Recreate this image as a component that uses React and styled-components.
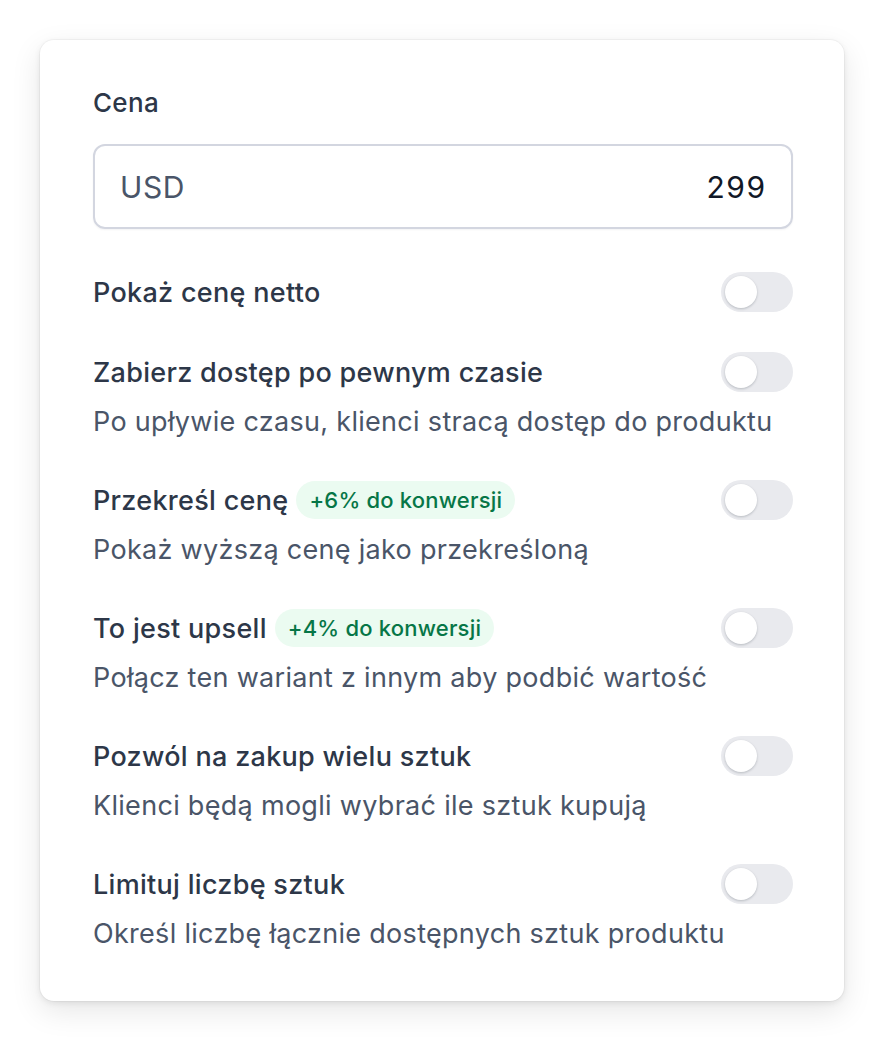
import React from 'react'
import styled, { createGlobalStyle } from 'styled-components'

const GlobalStyle = createGlobalStyle`
  body {
    margin: 0;
    background: #ffffff;
    font-family: Inter, "Noto Sans", sans-serif;
  }
`

const options = [
  { title: 'Pokaż cenę netto' },
  { title: 'Zabierz dostęp po pewnym czasie', desc: 'Po upływie czasu, klienci stracą dostęp do produktu' },
  { title: 'Przekreśl cenę', badge: '+6% do konwersji', desc: 'Pokaż wyższą cenę jako przekreśloną' },
  { title: 'To jest upsell', badge: '+4% do konwersji', desc: 'Połącz ten wariant z innym aby podbić wartość' },
  { title: 'Pozwól na zakup wielu sztuk', desc: 'Klienci będą mogli wybrać ile sztuk kupują' },
  { title: 'Limituj liczbę sztuk', desc: 'Określ liczbę łącznie dostępnych sztuk produktu' },
]

function App() {
  return (
    <Page>
      <GlobalStyle />
      <Card>
        <Label>Cena</Label>
        <PriceInput>
          <Currency>USD</Currency>
          <Amount>299</Amount>
        </PriceInput>
        <List>
          {options.map((o) => (
            <Option key={o.title}>
              <TitleRow>
                <Title>
                  {o.title}
                  {o.badge && <Badge>{o.badge}</Badge>}
                </Title>
                <Toggle>
                  <Knob />
                </Toggle>
              </TitleRow>
              {o.desc && <Desc>{o.desc}</Desc>}
            </Option>
          ))}
        </List>
      </Card>
    </Page>
  )
}

export default App

const Page = styled.div`
  padding: 40px;
  width: 804px;
`

const Card = styled.div`
  background: #fff;
  border-radius: 14px;
  box-shadow: 0 0 0 1px rgba(0, 0, 0, 0.03), 0 10px 30px rgba(0, 0, 0, 0.1), 0 2px 6px rgba(0, 0, 0, 0.08);
  padding: 47px 51px 49px 53px;
  display: flex;
  flex-direction: column;
`

const Label = styled.div`
  font-size: 26px;
  line-height: 32px;
  font-weight: 500;
  letter-spacing: 0.3px;
  color: #2d3748;
`

const PriceInput = styled.div`
  margin-top: 25px;
  height: 85px;
  box-sizing: border-box;
  border: 2px solid #d3d6e0;
  border-radius: 12px;
  display: flex;
  align-items: center;
  justify-content: space-between;
  padding: 0 26px 0 25px;
  font-size: 30px;
  letter-spacing: 0.6px;
  box-shadow: 0 1px 2px rgba(16, 24, 40, 0.05);
`

const Currency = styled.span`
  color: #4a5568;
`

const Amount = styled.span`
  color: #111827;
  letter-spacing: 1.5px;
  margin-right: -1.5px;
`

const List = styled.div`
  margin-top: 43px;
  display: flex;
  flex-direction: column;
  gap: 40px;
`

const Option = styled.div`
  display: flex;
  flex-direction: column;
`

const TitleRow = styled.div`
  display: flex;
  align-items: center;
  justify-content: space-between;
  height: 40px;
`

const Title = styled.div`
  display: flex;
  align-items: center;
  gap: 8px;
  font-size: 27px;
  font-weight: 500;
  letter-spacing: 0.3px;
  color: #2d3748;
`

const Badge = styled.span`
  display: inline-flex;
  align-items: center;
  height: 38px;
  padding: 0 13px;
  border-radius: 19px;
  background: #ebfbf1;
  color: #067647;
  font-size: 22px;
  font-weight: 500;
  letter-spacing: 0.2px;
`

const Toggle = styled.div`
  width: 72px;
  height: 40px;
  border-radius: 20px;
  background: #e9eaee;
  padding: 4px;
  box-sizing: border-box;
  display: flex;
  align-items: center;
`

const Knob = styled.div`
  width: 32px;
  height: 32px;
  border-radius: 50%;
  background: #fff;
  box-shadow: 0 1px 3px rgba(16, 24, 40, 0.15), 0 1px 2px rgba(16, 24, 40, 0.08);
`

const Desc = styled.div`
  margin-top: 12px;
  font-size: 27px;
  line-height: 36px;
  letter-spacing: 0.3px;
  color: #4a5568;
`
